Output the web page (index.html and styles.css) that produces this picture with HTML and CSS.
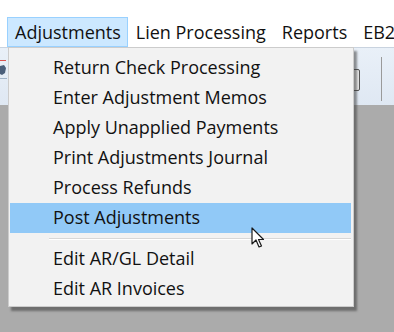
FILE: index.html
```html
<!DOCTYPE html>
<html>
<head>
<meta charset="utf-8">
<link rel="stylesheet" href="styles.css">
</head>
<body>
<div class="top"></div>
<div class="menubar">
  <span class="mb-item active">Adjustments</span>
  <span class="mb-item">Lien Processing</span>
  <span class="mb-item">Reports</span>
  <span class="mb-item">EB2</span>
</div>
<div class="workspace">
  <div class="toolbar">
    <svg class="tb-icon" width="8" height="26" viewBox="0 0 8 26">
      <rect x="0" y="6" width="6" height="1" fill="#d9534f"/>
      <path d="M0 12 L4 11 L6 14 L5 19 L2 21 L0 20 Z" fill="#4a5f7a"/>
      <rect x="0" y="24" width="7" height="1" fill="#9fb3c8"/>
    </svg>
    <div class="tb-btn"></div>
    <div class="tb-sep"></div>
  </div>
  <div class="popup">
    <div class="item">Return Check Processing</div>
    <div class="item">Enter Adjustment Memos</div>
    <div class="item">Apply Unapplied Payments</div>
    <div class="item">Print Adjustments Journal</div>
    <div class="item">Process Refunds</div>
    <div class="item hover">Post Adjustments</div>
    <div class="sep"></div>
    <div class="item">Edit AR/GL Detail</div>
    <div class="item">Edit AR Invoices</div>
  </div>
  <svg class="cursor" width="14" height="22" viewBox="0 0 14 22">
    <path d="M1 1 L1 17 L5 13 L8 20 L10.5 19 L7.5 12.5 L12.5 12.5 Z" fill="#fff" stroke="#1a1a1a" stroke-width="1.2" stroke-linejoin="round"/>
  </svg>
</div>
</body>
</html>
```
FILE: styles.css
```css
html, body {
  margin: 0;
  padding: 0;
}
body {
  width: 394px;
  height: 332px;
  overflow: hidden;
  background: #ababab;
  font-family: "Open Sans", "Noto Sans", sans-serif;
  font-size: 18px;
  color: #111;
}
.top {
  height: 17px;
  background: #fff;
}
.menubar {
  height: 30px;
  background: #fff;
  display: flex;
  align-items: stretch;
  padding-left: 7px;
}
.mb-item {
  display: flex;
  align-items: center;
  padding: 0 7px;
  border: 1px solid transparent;
  box-sizing: border-box;
  white-space: nowrap;
}
.mb-item.active {
  background: #cce8ff;
  border-color: #99d1ff;
  padding-right: 6px;
}
.workspace {
  position: relative;
  height: 285px;
}
.toolbar {
  height: 58px;
  background: linear-gradient(#e9f0f8, #dfe8f3);
  border-top: 1px solid #c9d3df;
  box-sizing: border-box;
  position: relative;
}
.tb-icon {
  position: absolute;
  left: 0;
  top: 6px;
}
.tb-btn {
  position: absolute;
  left: 350px;
  top: 21px;
  width: 8px;
  height: 20px;
  border: 1px solid #555;
  border-radius: 2px;
  background: #e8e8e8;
}
.tb-sep {
  position: absolute;
  left: 381px;
  top: 9px;
  width: 1px;
  height: 44px;
  background: #9a9a9a;
}
.popup {
  position: absolute;
  left: 8px;
  top: 0;
  width: 346px;
  height: 260px;
  box-sizing: border-box;
  background: #f2f2f2;
  border: 1px solid #cccccc;
  padding: 5px 2px 3px 1px;
  box-shadow: 3px 4px 2px rgba(60, 60, 60, 0.55);
}
.item {
  height: 30px;
  line-height: 29px;
  padding-left: 43px;
  white-space: nowrap;
}
.item.hover {
  background: #91c9f7;
}
.sep {
  height: 11px;
  margin-left: 39px;
  position: relative;
}
.sep::after {
  content: "";
  position: absolute;
  left: 0;
  right: 0;
  top: 5px;
  height: 1px;
  background: #d7d7d7;
  box-shadow: 0 1px 0 #fff;
}
.cursor {
  position: absolute;
  left: 251px;
  top: 180px;
}
```
